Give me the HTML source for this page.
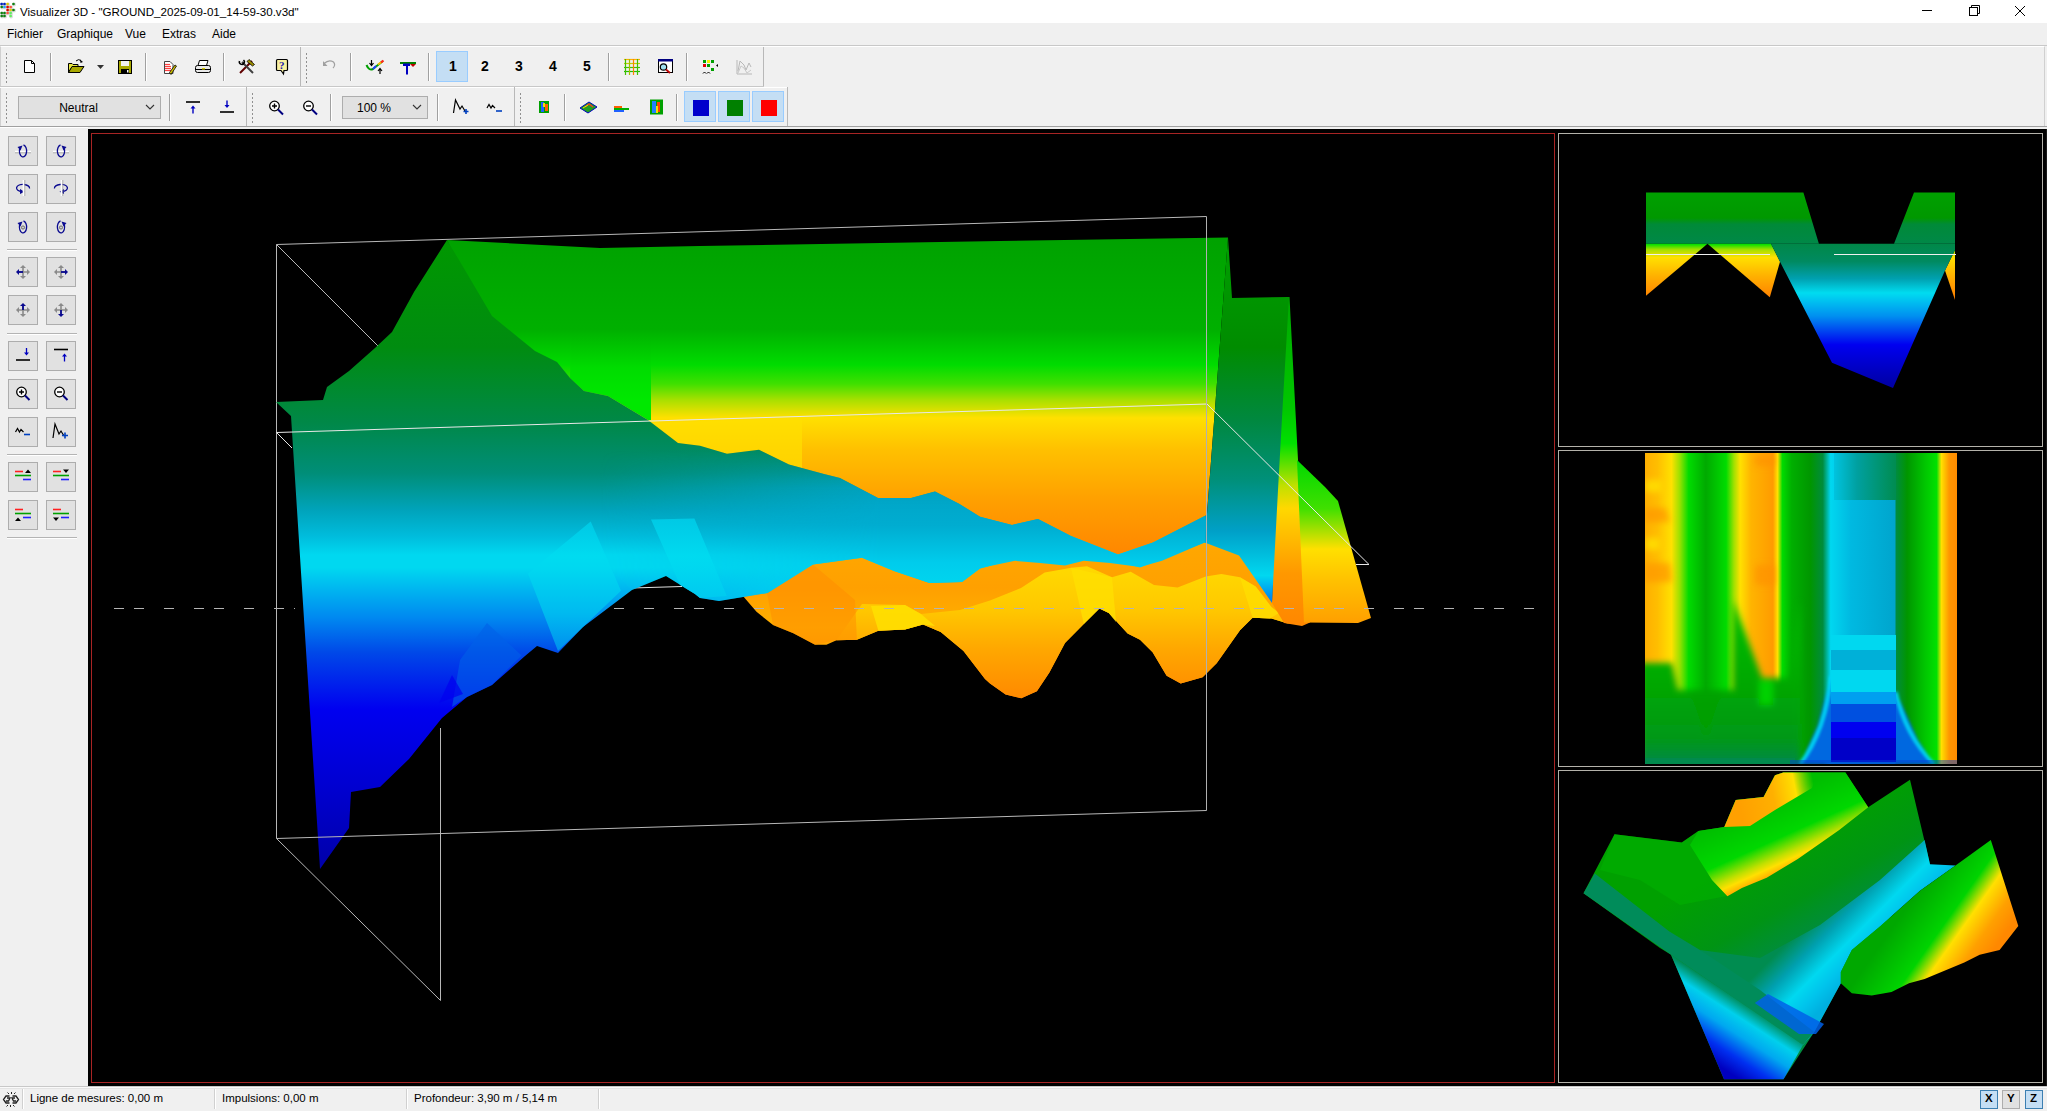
<!DOCTYPE html>
<html><head><meta charset="utf-8">
<style>
*{box-sizing:border-box}
html,body{margin:0;padding:0}
body{width:2047px;height:1111px;overflow:hidden;position:relative;background:#f0f0f0;font-family:"Liberation Sans",sans-serif;color:#000}
.a{position:absolute}
#title{left:0;top:0;width:2047px;height:23px;background:#fff}
#title .t{left:20px;top:5px;font-size:11.6px;white-space:nowrap}
.menu{top:27px;font-size:12px;white-space:nowrap}
.sep{position:absolute;width:1px;background:#a0a0a0;border-right:1px solid #fff;width:2px}
.grip{position:absolute;width:3px;background-image:radial-gradient(circle,#909090 0.8px,transparent 1px);background-size:3px 4px}
.sb{position:absolute;width:30px;height:30px;background:#e1e1e1;border:1px solid #adadad}
.sbsep{position:absolute;left:7px;width:70px;height:2px;border-top:1px solid #b0b0b0;border-bottom:1px solid #fff}
.sbt{position:absolute;top:1092px;font-size:11.5px;white-space:nowrap}
.ssep{position:absolute;top:1089px;width:2px;height:20px;border-left:1px solid #d0d0d0;border-right:1px solid #fff}
.num{position:absolute;top:58px;font-size:14px;font-weight:bold;width:20px;text-align:center}
.combo{position:absolute;background:#e1e1e1;border:1px solid #adadad;font-size:12px;text-align:center}
.selb{position:absolute;background:#c4def4;border:1px solid #99ccff}
</style></head><body>

<!-- title bar -->
<div id="title" class="a">
  <svg class="a" style="left:0;top:0" width="18" height="20"><circle cx="2.1" cy="4.5" r="1.9" fill="#999" opacity="0.35"/><circle cx="5.0" cy="4.5" r="1.9" fill="#999" opacity="0.35"/><circle cx="8.1" cy="4.5" r="1.9" fill="#999" opacity="0.35"/><circle cx="14.0" cy="4.5" r="1.9" fill="#999" opacity="0.35"/><circle cx="2.2" cy="7.5" r="1.9" fill="#999" opacity="0.35"/><circle cx="5.0" cy="7.5" r="1.9" fill="#999" opacity="0.35"/><circle cx="8.1" cy="7.5" r="1.9" fill="#999" opacity="0.35"/><circle cx="11.2" cy="7.5" r="1.9" fill="#999" opacity="0.35"/><circle cx="8.1" cy="10.5" r="1.9" fill="#999" opacity="0.35"/><circle cx="11.1" cy="10.5" r="1.9" fill="#999" opacity="0.35"/><circle cx="14.0" cy="10.5" r="1.9" fill="#999" opacity="0.35"/><circle cx="2.2" cy="13.5" r="1.9" fill="#999" opacity="0.35"/><circle cx="5.0" cy="13.5" r="1.9" fill="#999" opacity="0.35"/><circle cx="8.1" cy="13.5" r="1.9" fill="#999" opacity="0.35"/><circle cx="11.1" cy="13.5" r="1.9" fill="#999" opacity="0.35"/><circle cx="2.2" cy="16.5" r="1.9" fill="#999" opacity="0.35"/><circle cx="5.0" cy="16.5" r="1.9" fill="#999" opacity="0.35"/><circle cx="11.1" cy="16.5" r="1.9" fill="#999" opacity="0.35"/><circle cx="1.6" cy="4" r="1.35" fill="#0020c0"/><circle cx="4.5" cy="4" r="1.35" fill="#0020c0"/><circle cx="7.6" cy="4" r="1.35" fill="#e0c800"/><circle cx="13.5" cy="4" r="1.35" fill="#108010"/><circle cx="1.7" cy="7" r="1.35" fill="#108010"/><circle cx="4.5" cy="7" r="1.35" fill="#20a0ff"/><circle cx="7.6" cy="7" r="1.35" fill="#e00000"/><circle cx="10.7" cy="7" r="1.35" fill="#ff5040"/><circle cx="7.6" cy="10" r="1.35" fill="#d00000"/><circle cx="10.6" cy="10" r="1.35" fill="#e0c800"/><circle cx="13.5" cy="10" r="1.35" fill="#108010"/><circle cx="1.7" cy="13" r="1.35" fill="#108010"/><circle cx="4.5" cy="13" r="1.35" fill="#108010"/><circle cx="7.6" cy="13" r="1.35" fill="#ff5040"/><circle cx="10.6" cy="13" r="1.35" fill="#60f060"/><circle cx="1.7" cy="16" r="1.35" fill="#108010"/><circle cx="4.5" cy="16" r="1.35" fill="#108010"/><circle cx="10.6" cy="16" r="1.35" fill="#60f060"/></svg>
  <div class="a t">Visualizer 3D - "GROUND_2025-09-01_14-59-30.v3d"</div>
  <svg class="a" style="left:1900px;top:0" width="147" height="23">
    <line x1="22" y1="10.5" x2="32" y2="10.5" stroke="#000" stroke-width="1"/>
    <rect x="69.5" y="7.5" width="8" height="8" fill="none" stroke="#000"/>
    <path d="M71.5 7.5 V5.5 H79.5 V13.5 H77.5" fill="none" stroke="#000"/>
    <path d="M115 6 L125 16 M125 6 L115 16" stroke="#000" stroke-width="1"/>
  </svg>
</div>

<!-- menu -->
<div class="a menu" style="left:7px">Fichier</div>
<div class="a menu" style="left:57px">Graphique</div>
<div class="a menu" style="left:125px">Vue</div>
<div class="a menu" style="left:162px">Extras</div>
<div class="a menu" style="left:212px">Aide</div>

<!-- rebar -->
<div class="a" style="left:0;top:45px;width:2047px;height:1px;background:#c8c8c8"></div>
<div class="a" style="left:0;top:46px;width:2045px;height:81px;border:1px solid #d0d0d0;border-top-color:#fff"></div>
<div class="a" style="left:0;top:86px;width:764px;height:1px;background:#c8c8c8"></div><div class="a" style="left:0;top:87px;width:788px;height:1px;background:#fff"></div>
<div class="a" style="left:0;top:126px;width:2047px;height:1px;background:#a0a0a0"></div>
<div class="a" style="left:763px;top:47px;width:1px;height:39px;background:#b8b8b8"></div>
<div class="a" style="left:787px;top:87px;width:1px;height:39px;background:#b8b8b8"></div>
<div class="a" style="left:300px;top:47px;width:1px;height:39px;background:#b8b8b8"></div>
<div class="a" style="left:246px;top:87px;width:1px;height:39px;background:#b8b8b8"></div>
<div class="a" style="left:514px;top:87px;width:1px;height:39px;background:#b8b8b8"></div>

<div class="grip" style="left:5px;top:52px;height:32px"></div>
<div class="grip" style="left:305px;top:52px;height:32px"></div>
<div class="grip" style="left:5px;top:92px;height:32px"></div>
<div class="grip" style="left:251px;top:92px;height:32px"></div>
<div class="grip" style="left:519px;top:92px;height:32px"></div>

<div class="sep" style="left:50px;top:53px;height:28px"></div>
<div class="sep" style="left:145px;top:53px;height:28px"></div>
<div class="sep" style="left:223px;top:53px;height:28px"></div>
<div class="sep" style="left:350px;top:53px;height:28px"></div>
<div class="sep" style="left:428px;top:53px;height:28px"></div>
<div class="sep" style="left:608px;top:53px;height:28px"></div>
<div class="sep" style="left:686px;top:53px;height:28px"></div>

<div class="sep" style="left:169px;top:94px;height:27px"></div>
<div class="sep" style="left:330px;top:94px;height:27px"></div>
<div class="sep" style="left:437px;top:94px;height:27px"></div>
<div class="sep" style="left:564px;top:94px;height:27px"></div>
<div class="sep" style="left:676px;top:94px;height:27px"></div>

<div class="selb" style="left:436px;top:51px;width:32px;height:31px"></div>
<div class="num" style="left:443px">1</div>
<div class="num" style="left:475px">2</div>
<div class="num" style="left:509px">3</div>
<div class="num" style="left:543px">4</div>
<div class="num" style="left:577px">5</div>

<div class="combo" style="left:18px;top:96px;width:143px;height:23px;padding-top:4px;padding-right:22px">Neutral</div>
<div class="combo" style="left:342px;top:96px;width:86px;height:23px;padding-top:4px;padding-right:22px">100 %</div>

<div class="selb" style="left:684px;top:91px;width:32px;height:31px"></div>
<div class="selb" style="left:718px;top:91px;width:32px;height:31px"></div>
<div class="selb" style="left:752px;top:91px;width:32px;height:31px"></div>
<div class="a" style="left:693px;top:100px;width:16px;height:16px;background:#0000cc"></div>
<div class="a" style="left:727px;top:100px;width:16px;height:16px;background:#008000"></div>
<div class="a" style="left:761px;top:100px;width:16px;height:16px;background:#ff0000"></div>

<!-- TOOLBAR ICONS -->
<svg class="a" style="left:0;top:0" width="800" height="128" id="icons">
<!-- new doc -->
<path d="M24.5 60.5 H31.5 L34.5 63.5 V72.5 H24.5 Z" fill="#fff" stroke="#000"/>
<path d="M31.5 60.5 V63.5 H34.5" fill="none" stroke="#000"/>
<!-- open folder -->
<path d="M68.5 63.5 H72 L73 64.5 H78 V67 H72 L68.5 72.5 Z" fill="#e8e840" stroke="#000" stroke-width="1"/>
<path d="M68.5 72.5 L72 66.5 H84 L80 72.5 Z" fill="#a8a800" stroke="#000"/>
<path d="M76 61 Q78.5 58.5 81 60.5" fill="none" stroke="#000"/>
<path d="M80 59.5 L83 62 L80.5 63 Z" fill="#000"/>
<!-- dropdown -->
<path d="M97 65 H104 L100.5 69 Z" fill="#333"/>
<!-- save -->
<rect x="118.5" y="60.5" width="13" height="13" fill="#a8a800" stroke="#000"/>
<rect x="121" y="61" width="8" height="5" fill="#f0f0f0"/>
<rect x="121" y="69" width="8" height="4.5" fill="#000"/>
<rect x="127" y="70" width="1.5" height="2.5" fill="#fff"/>
<!-- print preview -->
<path d="M164.5 61.5 H170 L173 64.5 V73.5 H164.5 Z" fill="#fff" stroke="#444"/>
<g stroke="#ff4040" stroke-width="1.2"><line x1="165" y1="64.5" x2="170" y2="64.5"/><line x1="165" y1="66.5" x2="171" y2="66.5"/><line x1="165" y1="68.5" x2="171" y2="68.5"/><line x1="165" y1="70.5" x2="171" y2="70.5"/></g>
<path d="M171 74.5 L176.5 66 L175 65 L169.5 72.5 Z" fill="#d0c000" stroke="#000" stroke-width="0.8"/>
<!-- printer -->
<path d="M199.5 60.5 H208 L206.5 65.5 H198 Z" fill="#fff" stroke="#000"/>
<rect x="195.5" y="65.5" width="15" height="7" rx="2" fill="#e8e8e8" stroke="#000"/>
<line x1="196" y1="69.5" x2="210" y2="69.5" stroke="#000"/>
<rect x="202" y="68" width="3" height="1.5" fill="#d8d000"/>
<!-- tools -->
<path d="M240 73 L252 61" stroke="#600000" stroke-width="2"/>
<path d="M249 59.5 L254.5 64.5 L252.5 66 L247 61.5 Z" fill="#a09000" stroke="#000" stroke-width="0.8"/>
<path d="M242 62 L253 73" stroke="#404040" stroke-width="2"/>
<path d="M239.5 61 A2.5 2.5 0 1 0 243.5 60" fill="none" stroke="#000" stroke-width="1.5"/>
<!-- help -->
<path d="M277.5 59.5 H286.5 Q287.5 59.5 287.5 60.5 V69.5 Q287.5 70.5 286.5 70.5 H284 L283.5 74 L281 70.5 H277.5 Q276.5 70.5 276.5 69.5 V60.5 Q276.5 59.5 277.5 59.5 Z" fill="#f8f0a0" stroke="#000" stroke-width="1.2"/>
<text x="279" y="69" font-family="Liberation Serif" font-weight="bold" font-size="11" fill="#1818b0">?</text>
<!-- undo disabled -->
<path d="M324 63.5 Q329 59 333.5 62 Q336 65 333 68" fill="none" stroke="#a0a0a0" stroke-width="1.2"/>
<path d="M323 61 L323 66 L327.5 66 Z" fill="#a0a0a0"/>
<!-- icon rainbow -->
<path d="M366.5 65 Q369 71 373 69 L383 61" fill="none" stroke="#00a000" stroke-width="2"/>
<path d="M373 69 L376 66" stroke="#2040ff" stroke-width="2"/>
<path d="M378 64.5 L383 61" stroke="#ffc000" stroke-width="2"/>
<path d="M381 62.5 L383.5 60.5" stroke="#ff2020" stroke-width="2"/>
<path d="M371.5 60 V65 M369.5 63 L371.5 65.5 L373.5 63" stroke="#000" stroke-width="1.2" fill="none"/>
<path d="M380 69 V74 M378 71 L380 68.5 L382 71" stroke="#000" stroke-width="1.2" fill="none"/>
<!-- T icon -->
<rect x="400" y="62" width="16" height="2" fill="#008000"/>
<path d="M410 64 H416 L413 67 Z" fill="#c00000"/>
<path d="M403 63.5 H410 V66 H408 V74.5 H406 V66 H403 Z" fill="#0000c0"/>
<!-- grid -->
<g stroke-width="1.2">
<line x1="624" y1="59.5" x2="640" y2="59.5" stroke="#ffb000"/>
<line x1="624" y1="63.5" x2="640" y2="63.5" stroke="#c0d000"/>
<line x1="624" y1="67.5" x2="640" y2="67.5" stroke="#40c000"/>
<line x1="624" y1="71.5" x2="640" y2="71.5" stroke="#20c000"/>
<line x1="625.5" y1="59" x2="625.5" y2="75" stroke="#40c000"/>
<line x1="629.5" y1="59" x2="629.5" y2="75" stroke="#a0c000"/>
<line x1="633.5" y1="59" x2="633.5" y2="75" stroke="#ff8000"/>
<line x1="637.5" y1="59" x2="637.5" y2="75" stroke="#40c000"/>
</g>
<!-- zoom window -->
<rect x="658.5" y="59.5" width="14" height="13" fill="#fff" stroke="#000"/>
<rect x="658" y="59" width="15" height="2.5" fill="#000080"/>
<circle cx="663.5" cy="67" r="3.2" fill="#a0e0f0" stroke="#000" stroke-width="1.2"/>
<line x1="666" y1="69.5" x2="670" y2="73" stroke="#c00000" stroke-width="1.8"/>
<!-- dots -->
<rect x="703" y="60" width="3" height="3" fill="#00a000"/><rect x="707" y="60" width="3" height="3" fill="#f0f000"/><rect x="711" y="60" width="3" height="3" fill="#00a000"/>
<rect x="703" y="64" width="3" height="3" fill="#e00000"/><rect x="707" y="64" width="3" height="3" fill="#00a000"/>
<rect x="711" y="68" width="3" height="3" fill="#00a000"/>
<path d="M716 65.5 L718 64 V67 Z" fill="#000"/>
<path d="M703 73.5 L704.5 72 L706 73.5 M707 73.5 L708.5 72 L710 73.5" stroke="#000" fill="none"/>
<!-- chart disabled -->
<path d="M737 60 V74 H752" fill="none" stroke="#b8b8b8"/>
<path d="M738 71 L740 61 L744 65 L746 70 L749 63 L751 67" fill="none" stroke="#b8b8b8"/>
<path d="M738 73 L741 66 L744 68 L747 73 L751 70" fill="none" stroke="#c8c8c8"/>
<!-- row 2 -->
<line x1="186" y1="102" x2="200" y2="102" stroke="#000" stroke-width="1.6"/>
<path d="M193 113.5 V107" stroke="#0000c0" stroke-width="1.4"/>
<path d="M190.5 108.5 L193 105.5 L195.5 108.5 Z" fill="#0000c0"/>
<line x1="220" y1="112" x2="234" y2="112" stroke="#000" stroke-width="1.6"/>
<path d="M227 100.5 V106" stroke="#0000c0" stroke-width="1.4"/>
<path d="M224.5 105 L227 108 L229.5 105 Z" fill="#0000c0"/>
<!-- zoom + -->
<circle cx="274.5" cy="106" r="4.8" fill="#fff" stroke="#000" stroke-width="1.3"/>
<path d="M278 109.5 L283 114.5" stroke="#000080" stroke-width="2"/>
<path d="M272 106 H277 M274.5 103.5 V108.5" stroke="#000" stroke-width="1.4"/>
<circle cx="308.5" cy="106" r="4.8" fill="#fff" stroke="#000" stroke-width="1.3"/>
<path d="M312 109.5 L317 114.5" stroke="#000080" stroke-width="2"/>
<path d="M306 106 H311" stroke="#000" stroke-width="1.4"/>
<!-- combos chevrons -->
<path d="M146 105 L150 109 L154 105" fill="none" stroke="#333" stroke-width="1.1"/>
<path d="M413 105 L417 109 L421 105" fill="none" stroke="#333" stroke-width="1.1"/>
<!-- M+ -->
<path d="M453.5 113 L455.5 100 L460 109 L462 106 L465 111" fill="none" stroke="#000" stroke-width="1.2"/>
<path d="M463.5 111.5 H468.5 M466 109 V114" stroke="#0040c0" stroke-width="1.6"/>
<!-- M- -->
<path d="M487 108 L489 104.5 L491 108 L492.5 105.5 L495 108" fill="none" stroke="#000" stroke-width="1.2"/>
<path d="M496 111 H502" stroke="#0040c0" stroke-width="1.6"/>
<!-- small heatmap -->
<rect x="539" y="101" width="10" height="12" fill="#00a000"/>
<rect x="541" y="102" width="3" height="10" fill="#2060ff"/>
<rect x="545" y="104" width="3" height="7" fill="#ff6000"/>
<rect x="543" y="103" width="2" height="4" fill="#f0e000"/>
<!-- 3D icon -->
<path d="M580 108 L589 102 L597 107 L588 113 Z" fill="#20a020" stroke="#0000c0" stroke-width="1"/>
<path d="M585 107 L589 104 L593 107" fill="none" stroke="#ff3030" stroke-width="1.2"/>
<path d="M583 108 L588 105" stroke="#f0e000" stroke-width="1"/>
<!-- flat icon -->
<rect x="614" y="106" width="8" height="2" fill="#ff6000"/>
<rect x="614" y="108" width="15" height="2" fill="#00b000"/>
<rect x="614" y="110" width="10" height="2" fill="#2060ff"/>
<!-- heatmap big -->
<rect x="650" y="99.5" width="13" height="15" fill="#00a000"/>
<rect x="652" y="101" width="4" height="12" fill="#2080ff"/>
<rect x="657" y="102" width="3" height="10" fill="#ff4000"/>
<rect x="656" y="106" width="2" height="7" fill="#f0e000"/>

</svg>

<!-- sidebar -->
<div class="a" style="left:0;top:127px;width:88px;height:960px;background:#f0f0f0;border-top:1px solid #fff"></div>
<div id="sidebar">
<svg class="a" style="left:0;top:0" width="88" height="560">
<rect x="8.5" y="136.5" width="29" height="29" fill="#e1e1e1" stroke="#adadad"/>
<rect x="46.5" y="136.5" width="29" height="29" fill="#e1e1e1" stroke="#adadad"/>
<rect x="8.5" y="174.5" width="29" height="29" fill="#e1e1e1" stroke="#adadad"/>
<rect x="46.5" y="174.5" width="29" height="29" fill="#e1e1e1" stroke="#adadad"/>
<rect x="8.5" y="212.5" width="29" height="29" fill="#e1e1e1" stroke="#adadad"/>
<rect x="46.5" y="212.5" width="29" height="29" fill="#e1e1e1" stroke="#adadad"/>
<rect x="8.5" y="257.5" width="29" height="29" fill="#e1e1e1" stroke="#adadad"/>
<rect x="46.5" y="257.5" width="29" height="29" fill="#e1e1e1" stroke="#adadad"/>
<rect x="8.5" y="295.5" width="29" height="29" fill="#e1e1e1" stroke="#adadad"/>
<rect x="46.5" y="295.5" width="29" height="29" fill="#e1e1e1" stroke="#adadad"/>
<rect x="8.5" y="341.5" width="29" height="29" fill="#e1e1e1" stroke="#adadad"/>
<rect x="46.5" y="341.5" width="29" height="29" fill="#e1e1e1" stroke="#adadad"/>
<rect x="8.5" y="379.5" width="29" height="29" fill="#e1e1e1" stroke="#adadad"/>
<rect x="46.5" y="379.5" width="29" height="29" fill="#e1e1e1" stroke="#adadad"/>
<rect x="8.5" y="417.5" width="29" height="29" fill="#e1e1e1" stroke="#adadad"/>
<rect x="46.5" y="417.5" width="29" height="29" fill="#e1e1e1" stroke="#adadad"/>
<rect x="8.5" y="462.5" width="29" height="29" fill="#e1e1e1" stroke="#adadad"/>
<rect x="46.5" y="462.5" width="29" height="29" fill="#e1e1e1" stroke="#adadad"/>
<rect x="8.5" y="500.5" width="29" height="29" fill="#e1e1e1" stroke="#adadad"/>
<rect x="46.5" y="500.5" width="29" height="29" fill="#e1e1e1" stroke="#adadad"/>
<line x1="7" y1="249.5" x2="77" y2="249.5" stroke="#b4b4b4"/><line x1="7" y1="250.5" x2="77" y2="250.5" stroke="#fff"/>
<line x1="7" y1="333.5" x2="77" y2="333.5" stroke="#b4b4b4"/><line x1="7" y1="334.5" x2="77" y2="334.5" stroke="#fff"/>
<line x1="7" y1="454.5" x2="77" y2="454.5" stroke="#b4b4b4"/><line x1="7" y1="455.5" x2="77" y2="455.5" stroke="#fff"/>
<line x1="7" y1="537.5" x2="77" y2="537.5" stroke="#b4b4b4"/><line x1="7" y1="538.5" x2="77" y2="538.5" stroke="#fff"/>
<line x1="15" y1="151.5" x2="31" y2="151.5" stroke="#fff" stroke-width="1.6"/><line x1="15" y1="152.8" x2="31" y2="152.8" stroke="#a0a0a0" stroke-width="0.8"/><path d="M23.5 145 A3.6 6 0 1 1 19.6 149" fill="none" stroke="#0a0a90" stroke-width="1.3"/><path d="M17.5 147 L22.5 145.5 L20.5 150.5 Z" fill="#0a0a90"/>
<line x1="53" y1="151.5" x2="69" y2="151.5" stroke="#fff" stroke-width="1.6"/><line x1="53" y1="152.8" x2="69" y2="152.8" stroke="#a0a0a0" stroke-width="0.8"/><path d="M60.5 145 A3.6 6 0 1 0 64.4 149" fill="none" stroke="#0a0a90" stroke-width="1.3"/><path d="M66.5 147 L61.5 145.5 L63.5 150.5 Z" fill="#0a0a90"/>
<path d="M29.5 188.5 A6.5 3.6 0 1 0 22 191.6" fill="none" stroke="#0a0a90" stroke-width="1.3"/><path d="M20 189 L24.5 191.8 L20 194 Z" fill="#0a0a90"/><line x1="23.5" y1="180" x2="23.5" y2="196" stroke="#fff" stroke-width="1.6"/><line x1="24.8" y1="180" x2="24.8" y2="196" stroke="#a0a0a0" stroke-width="0.8"/>
<path d="M54.5 188.5 A6.5 3.6 0 1 1 62 191.6" fill="none" stroke="#0a0a90" stroke-width="1.3"/><path d="M64 189 L59.5 191.8 L64 194 Z" fill="#0a0a90"/><line x1="61.5" y1="180" x2="61.5" y2="196" stroke="#fff" stroke-width="1.6"/><line x1="62.8" y1="180" x2="62.8" y2="196" stroke="#a0a0a0" stroke-width="0.8"/>
<path d="M23.5 221 A3.6 6 0 1 1 19.6 225" fill="none" stroke="#0a0a90" stroke-width="1.3"/><path d="M17.5 223 L22.5 221.5 L20.5 226.5 Z" fill="#0a0a90"/><circle cx="23" cy="227.5" r="1.6" fill="#d0d0d0" stroke="#404040" stroke-width="0.7"/>
<path d="M60.5 221 A3.6 6 0 1 0 64.4 225" fill="none" stroke="#0a0a90" stroke-width="1.3"/><path d="M66.5 223 L61.5 221.5 L63.5 226.5 Z" fill="#0a0a90"/><circle cx="61" cy="227.5" r="1.6" fill="#d0d0d0" stroke="#404040" stroke-width="0.7"/>
<path d="M17 272 H29 M23 266 V278" stroke="#8a8a8a" stroke-width="1.6"/><path d="M16 272 l3 -3 v6 z" fill="#0a0a90"/><path d="M30 272 l-3 -3 v6 z" fill="#8a8a8a"/><path d="M23 265 l-3 3 h6 z" fill="#8a8a8a"/><path d="M23 279 l-3 -3 h6 z" fill="#8a8a8a"/><path d="M17 272 H23" stroke="#0a0a90" stroke-width="1.8"/>
<path d="M55 272 H67 M61 266 V278" stroke="#8a8a8a" stroke-width="1.6"/><path d="M54 272 l3 -3 v6 z" fill="#8a8a8a"/><path d="M68 272 l-3 -3 v6 z" fill="#0a0a90"/><path d="M61 265 l-3 3 h6 z" fill="#8a8a8a"/><path d="M61 279 l-3 -3 h6 z" fill="#8a8a8a"/><path d="M61 272 H67" stroke="#0a0a90" stroke-width="1.8"/>
<path d="M17 310 H29 M23 304 V316" stroke="#8a8a8a" stroke-width="1.6"/><path d="M16 310 l3 -3 v6 z" fill="#8a8a8a"/><path d="M30 310 l-3 -3 v6 z" fill="#8a8a8a"/><path d="M23 303 l-3 3 h6 z" fill="#0a0a90"/><path d="M23 317 l-3 -3 h6 z" fill="#8a8a8a"/><path d="M23 304 V310" stroke="#0a0a90" stroke-width="1.8"/>
<path d="M55 310 H67 M61 304 V316" stroke="#8a8a8a" stroke-width="1.6"/><path d="M54 310 l3 -3 v6 z" fill="#8a8a8a"/><path d="M68 310 l-3 -3 v6 z" fill="#8a8a8a"/><path d="M61 303 l-3 3 h6 z" fill="#8a8a8a"/><path d="M61 317 l-3 -3 h6 z" fill="#0a0a90"/><path d="M61 310 V316" stroke="#0a0a90" stroke-width="1.8"/>
<line x1="16" y1="360" x2="30" y2="360" stroke="#000" stroke-width="1.6"/><path d="M26.5 348 V353" stroke="#0000c0" stroke-width="1.3"/><path d="M24 352.5 L26.5 355.5 L29 352.5 Z" fill="#0000c0"/>
<line x1="54" y1="349.5" x2="68" y2="349.5" stroke="#000" stroke-width="1.6"/><path d="M64.5 361.5 V356" stroke="#0000c0" stroke-width="1.3"/><path d="M62 356.5 L64.5 353.5 L67 356.5 Z" fill="#0000c0"/>
<circle cx="21.5" cy="392" r="4.8" fill="#fff" stroke="#000" stroke-width="1.3"/><path d="M25 395.5 L29.5 400" stroke="#000080" stroke-width="2"/><path d="M19 392 H24 M21.5 389.5 V394.5" stroke="#000" stroke-width="1.4"/>
<circle cx="59.5" cy="392" r="4.8" fill="#fff" stroke="#000" stroke-width="1.3"/><path d="M63 395.5 L67.5 400" stroke="#000080" stroke-width="2"/><path d="M57 392 H62" stroke="#000" stroke-width="1.4"/>
<path d="M15.5 432 L17.5 428.5 L19.5 432 L21 429.5 L23.5 432" fill="none" stroke="#000" stroke-width="1.2"/><path d="M24 434.5 H30" stroke="#0040c0" stroke-width="1.6"/>
<path d="M53 438 L55 424 L59 434 L61 431 L64 436" fill="none" stroke="#000" stroke-width="1.2"/><path d="M62 435.5 H68 M65 432.5 V438.5" stroke="#0040c0" stroke-width="1.6"/>
<path d="M15 471.5 H23" stroke="#ff2020" stroke-width="1.6"/><path d="M15 475.5 H31" stroke="#00a000" stroke-width="1.6"/><path d="M23 479.5 H31" stroke="#2020ff" stroke-width="1.6"/><path d="M25 473 L28 469.5 L31 473 Z" fill="#000"/>
<path d="M53 471.5 H61" stroke="#ff2020" stroke-width="1.6"/><path d="M53 475.5 H69" stroke="#00a000" stroke-width="1.6"/><path d="M61 479.5 H69" stroke="#2020ff" stroke-width="1.6"/><path d="M63 469.5 L66 473 L69 469.5 Z" fill="#000"/>
<path d="M15 509.5 H23" stroke="#ff2020" stroke-width="1.6"/><path d="M15 513.5 H31" stroke="#00a000" stroke-width="1.6"/><path d="M23 517.5 H31" stroke="#2020ff" stroke-width="1.6"/><path d="M15 521 L18 517.5 L21 521 Z" fill="#000"/>
<path d="M53 509.5 H61" stroke="#ff2020" stroke-width="1.6"/><path d="M53 513.5 H69" stroke="#00a000" stroke-width="1.6"/><path d="M61 517.5 H69" stroke="#2020ff" stroke-width="1.6"/><path d="M53 517.5 L56 521 L59 517.5 Z" fill="#000"/>
</svg>
</div>

<!-- viewport -->
<div class="a" style="left:88px;top:129px;width:1959px;height:957px;background:#000"></div>
<div class="a" style="left:2046px;top:129px;width:1px;height:958px;background:#1a1a1a"></div>
<svg class="a" style="left:0;top:0" width="2047" height="1111" id="vp">
<defs>
<linearGradient id="gBack" gradientUnits="userSpaceOnUse" x1="0" y1="240" x2="0" y2="560">
 <stop offset="0" stop-color="#00a200"/>
 <stop offset="0.28" stop-color="#00b000"/>
 <stop offset="0.39" stop-color="#00dc00"/>
 <stop offset="0.45" stop-color="#40e000"/>
 <stop offset="0.50" stop-color="#a8e000"/>
 <stop offset="0.556" stop-color="#ffe000"/>
 <stop offset="0.656" stop-color="#ffc000"/>
 <stop offset="0.81" stop-color="#ffa000"/>
 <stop offset="1" stop-color="#ff8400"/>
</linearGradient>
<linearGradient id="gFront" gradientUnits="userSpaceOnUse" x1="0" y1="240" x2="0" y2="870">
 <stop offset="0" stop-color="#009800"/>
 <stop offset="0.17" stop-color="#008c10"/>
 <stop offset="0.29" stop-color="#008848"/>
 <stop offset="0.37" stop-color="#008e78"/>
 <stop offset="0.43" stop-color="#00a4bc"/>
 <stop offset="0.47" stop-color="#00bcdc"/>
 <stop offset="0.50" stop-color="#00d8f0"/>
 <stop offset="0.52" stop-color="#00d8f0"/>
 <stop offset="0.56" stop-color="#00b0f0"/>
 <stop offset="0.60" stop-color="#0088f0"/>
 <stop offset="0.655" stop-color="#0048e8"/>
 <stop offset="0.745" stop-color="#0000f0"/>
 <stop offset="0.87" stop-color="#0000d0"/>
 <stop offset="1" stop-color="#0000a8"/>
</linearGradient>
<linearGradient id="gYel" gradientUnits="userSpaceOnUse" x1="0" y1="570" x2="0" y2="700">
 <stop offset="0" stop-color="#ffd800"/>
 <stop offset="0.3" stop-color="#ffc800"/>
 <stop offset="0.6" stop-color="#ffa800"/>
 <stop offset="1" stop-color="#ff8800"/>
</linearGradient>
<linearGradient id="gBright" gradientUnits="userSpaceOnUse" x1="0" y1="335" x2="0" y2="400">
 <stop offset="0" stop-color="#00b400" stop-opacity="0"/>
 <stop offset="0.5" stop-color="#00dc00"/>
 <stop offset="1" stop-color="#00e800"/>
</linearGradient>
<linearGradient id="gBandMask" gradientUnits="userSpaceOnUse" x1="600" y1="0" x2="880" y2="0">
 <stop offset="0" stop-color="#000"/><stop offset="1" stop-color="#fff"/>
</linearGradient>
<mask id="mBand" maskUnits="userSpaceOnUse" x="0" y="0" width="2047" height="1111"><rect x="0" y="0" width="2047" height="1111" fill="url(#gBandMask)"/></mask>
<linearGradient id="gBand" gradientUnits="userSpaceOnUse" x1="0" y1="450" x2="0" y2="600">
 <stop offset="0" stop-color="#00a0c0" stop-opacity="0"/>
 <stop offset="0.25" stop-color="#00a4c8" stop-opacity="0.8"/>
 <stop offset="0.5" stop-color="#00acd0"/>
 <stop offset="0.75" stop-color="#00ccec"/>
 <stop offset="1" stop-color="#00dcf0"/>
</linearGradient>
<linearGradient id="gFacet" gradientUnits="userSpaceOnUse" x1="0" y1="515" x2="0" y2="655">
 <stop offset="0" stop-color="#00d0ec"/>
 <stop offset="0.3" stop-color="#00dcf0"/>
 <stop offset="0.7" stop-color="#00c8f0"/>
 <stop offset="1" stop-color="#00a0f0"/>
</linearGradient>
<linearGradient id="gLow" gradientUnits="userSpaceOnUse" x1="0" y1="540" x2="0" y2="700">
 <stop offset="0" stop-color="#ffa800"/>
 <stop offset="0.3" stop-color="#ffa000"/>
 <stop offset="0.55" stop-color="#ffb000"/>
 <stop offset="0.8" stop-color="#ff9800"/>
 <stop offset="1" stop-color="#ff8000"/>
</linearGradient>
<linearGradient id="gRDark" gradientUnits="userSpaceOnUse" x1="0" y1="237" x2="0" y2="605">
 <stop offset="0" stop-color="#00a000"/>
 <stop offset="0.3" stop-color="#008c00"/>
 <stop offset="0.5" stop-color="#008840"/>
 <stop offset="0.66" stop-color="#00907a"/>
 <stop offset="0.8" stop-color="#00a0c8"/>
 <stop offset="0.92" stop-color="#00d8f0"/>
 <stop offset="1" stop-color="#0070f0"/>
</linearGradient>
<linearGradient id="gRStrip" gradientUnits="userSpaceOnUse" x1="0" y1="297" x2="0" y2="622">
 <stop offset="0" stop-color="#00a800"/>
 <stop offset="0.35" stop-color="#00c800"/>
 <stop offset="0.45" stop-color="#00e000"/>
 <stop offset="0.58" stop-color="#c0e000"/>
 <stop offset="0.65" stop-color="#ffd800"/>
 <stop offset="0.85" stop-color="#ff9800"/>
 <stop offset="1" stop-color="#ff8800"/>
</linearGradient>
<linearGradient id="gRTri" gradientUnits="userSpaceOnUse" x1="0" y1="460" x2="0" y2="622">
 <stop offset="0" stop-color="#00d800"/>
 <stop offset="0.3" stop-color="#40e000"/>
 <stop offset="0.55" stop-color="#ffe000"/>
 <stop offset="0.75" stop-color="#ffc000"/>
 <stop offset="1" stop-color="#ffa000"/>
</linearGradient>
</defs>
<g id="main">
<g stroke="#b8b8b8" stroke-width="1" fill="none">
 <line x1="276.5" y1="244.5" x2="1206.5" y2="216.5"/>
 <line x1="276.5" y1="244.5" x2="276.5" y2="838.5"/>
 <line x1="276.5" y1="244.5" x2="378" y2="346"/>
 <line x1="276.5" y1="838.5" x2="440.5" y2="1000.5"/>
 <line x1="440.5" y1="728" x2="440.5" y2="1000.5"/>
 <line x1="632" y1="588" x2="682" y2="586.5" stroke="#e0e0e0"/>
</g>
<polygon fill="url(#gBack)" points="447,240 600,248 700,246 1000,241 1228,237.5 1207,514 1203.7,518.6 1151,545.6 1116,557.5 1069,539 1036,522 1010,528 978,519.7 957,506.7 933,494.6 909,501 876,501 838,481 822,477 787,467.6 757,452.7 725,456.8 698,448.7 676,446 646,423 606,399 582,394 568,381 555,365 533,354 517,341 490,319 460,268"/>
<polygon fill="#ffe000" opacity="0.7" points="653,423 802,418 802,468 789,464.6 759,449.7 727,453.8 700,445.7 678,443"/>
<polygon fill="url(#gBright)" points="571,335 651,335 651,420 648,420 608,396 584,391 570,378"/>
<polygon fill="url(#gLow)" points="700,595 719,598 743,594 767.5,590 813,561.5 862,554.7 894,568 929.5,580 962,579 980,565.5 990,563 1015,557.8 1040,560 1065,562.5 1083.8,557.8 1110,560 1140,564 1162,557.8 1204.6,539.6 1239,552.6 1254,574 1271.6,600 1302.6,623.3 1302.6,623.3 1287,623.3 1271.4,618.6 1252.6,617.8 1240,630.3 1216.7,663.2 1202.6,677.2 1180.7,683.5 1166.6,675.7 1152.6,652.2 1140,639.7 1127.6,633.5 1108.8,613 1099.4,608.5 1083.8,624 1065,642.9 1049.4,672.6 1036.9,691.3 1021.3,698.3 1005.6,694.4 990,683.5 985,679 963.5,651 940.7,632 923,624.5 905,629.5 878.4,630.8 856.9,639.7 836.5,640.3 826.4,644.8 815,644.8 793.3,633.3 773,625 756.5,611.8 743.8,597"/>
<polygon fill="url(#gYel)" points="862,604 905,605 921,614 960,610 990,600.6 1021,588 1044.7,572.5 1071.3,567.8 1087,566.3 1112,577.2 1130.7,571.7 1154,585 1177.6,587.4 1205.7,576.4 1221.4,574 1240,577.2 1255.7,586.6 1271.4,607 1279,613 1302.6,623.3 1302.6,623.3 1287,623.3 1271.4,618.6 1252.6,617.8 1240,630.3 1216.7,663.2 1202.6,677.2 1180.7,683.5 1166.6,675.7 1152.6,652.2 1140,639.7 1127.6,633.5 1108.8,613 1099.4,608.5 1083.8,624 1065,642.9 1049.4,672.6 1036.9,691.3 1021.3,698.3 1005.6,694.4 990,683.5 985,679 963.5,651 940.7,632 923,624.5 905,629.5 878.4,630.8 856.9,639.7 836.5,640.3"/>
<polygon fill="#ffe000" opacity="0.75" points="1071,567.8 1112,577.2 1116,622 1108.8,613 1099.4,608.5 1083.8,624"/>
<polygon fill="#ffe000" opacity="0.7" points="1240,577.2 1255.7,586.6 1271.4,607 1279,613 1270,618.6 1252.6,617.8"/>
<polygon fill="#ffe000" opacity="0.85" points="871,606 905,605 921,614 935,626 923,624.5 905,629.5 878.4,630.8"/>
<polygon fill="#ff8c00" opacity="0.5" points="767,593 813,564.5 855,600 856.9,639.7 836.5,640.3 815,644.8 793.3,633.3 773,625"/>
<line x1="114" y1="608.5" x2="295" y2="608.5" stroke="#b4b4b4" stroke-dasharray="10 10 10 20 10 20"/>
<polygon fill="url(#gFront)" points="276,402 323,400 327,387 349,371 375,348 392,332 414,292 447,240 462,265 492,316 519,338 535,351 557,362 570,378 584,391 608,396 648,420 678,443 700,445.7 727,453.8 759,449.7 789,464.6 824,474 840,478 878,498 911,498 935,491.6 959,503.7 980,516.7 1012,525 1038,519 1071,536 1118,554.5 1153,542.6 1205.7,515.6 1207,543 1204.6,542.6 1140,567.5 1090,554.5 1064,565 1023,556.7 980,568.5 962,582 929.5,583 894,571 862,557.7 813,564.5 767.5,593 743,597 719,601 700,598 695,594 666,576 632,590 583,627 558,653 537,646 525,656 492,685 467,697 442,718 409,759 380,787 351,792 349,828 320,869 291,416"/>
<polygon mask="url(#mBand)" fill="url(#gBand)" points="727,453.8 759,449.7 789,464.6 824,474 840,478 878,498 911,498 935,491.6 959,503.7 980,516.7 1012,525 1038,519 1071,536 1118,554.5 1153,542.6 1205.7,515.6 1207,543 1204.6,542.6 1162,560.8 1140,567 1110,563 1083.8,560.8 1065,565.5 1040,563 1015,560.8 990,566 980,568.5 962,582 929.5,583 894,571 862,557.7 813,564.5 767.5,593 743,597 719,601 700,598 695,594 666,576 632,590 600,560 584,391 608,396 648,420 678,443 700,445.7"/>
<polygon fill="url(#gFacet)" opacity="0.75" points="590.7,521.6 621,590.8 583,627 558,651 528,573.5"/>
<polygon fill="url(#gFacet)" opacity="0.8" points="651,519.4 694.4,518.4 726.8,596 700,598 695,594 680,585"/>
<polygon fill="#0060e8" opacity="0.6" points="487,623 521.6,655.6 492,685 467,697 452,707 460,660"/>
<polygon fill="#0000f0" opacity="0.7" points="452,675 463,694 439,703"/>
<polygon fill="url(#gRStrip)" points="1286,297 1289.5,297 1298,460 1310,622.5 1302,626 1284,623 1272,603 1275,490 1280,400"/>
<polygon fill="url(#gRTri)" points="1297,460 1325,487 1338,501 1371,618 1358,623 1304,622.5"/>
<polygon fill="url(#gRDark)" points="1228,237.5 1232,298 1289,297 1283,400 1278,490 1272,603 1254,577 1239,555.6 1204.6,542.6 1207,514"/>
</g>
<g stroke="#e8e8e8" stroke-width="1" fill="none">
 <line x1="276.5" y1="432.5" x2="1207" y2="404"/>
 <line x1="276.5" y1="432.5" x2="292" y2="448"/>
 <line x1="1207" y1="404" x2="1369" y2="564.5"/>
 <line x1="1356" y1="564.5" x2="1369" y2="564.5"/>
 <line x1="1206.5" y1="216.5" x2="1206.5" y2="810.5" stroke="#b0b0b0"/>
 <line x1="276.5" y1="838.5" x2="1206.5" y2="810.5" stroke="#b8b8b8"/>
</g>
<line x1="614" y1="608.5" x2="1535" y2="608.5" stroke="#b4b4b4" stroke-dasharray="10 10 10 20 10 20" stroke-dashoffset="20"/>
<rect x="91.5" y="133.5" width="1463" height="949" fill="none" stroke="#a82424" stroke-width="1"/>

<defs>
<linearGradient id="pTopGreen" gradientUnits="userSpaceOnUse" x1="0" y1="192" x2="0" y2="244">
 <stop offset="0" stop-color="#00a000"/><stop offset="0.5" stop-color="#009800"/><stop offset="0.62" stop-color="#008a38"/><stop offset="1" stop-color="#008848"/>
</linearGradient>
<linearGradient id="pTopOr" gradientUnits="userSpaceOnUse" x1="0" y1="244" x2="0" y2="298">
 <stop offset="0" stop-color="#00e000"/><stop offset="0.1" stop-color="#a0e000"/><stop offset="0.25" stop-color="#ffe000"/><stop offset="0.6" stop-color="#ffb000"/><stop offset="1" stop-color="#ff8000"/>
</linearGradient>
<linearGradient id="pTopV" gradientUnits="userSpaceOnUse" x1="0" y1="244" x2="0" y2="388">
 <stop offset="0" stop-color="#008848"/><stop offset="0.12" stop-color="#008a60"/><stop offset="0.24" stop-color="#00a0b0"/><stop offset="0.34" stop-color="#00dcf0"/><stop offset="0.5" stop-color="#0090f0"/><stop offset="0.7" stop-color="#0000f0"/><stop offset="1" stop-color="#0000a0"/>
</linearGradient>
<linearGradient id="pHeat" gradientUnits="userSpaceOnUse" x1="1645" y1="0" x2="1957" y2="0">
 <stop offset="0" stop-color="#ffaf00"/>
 <stop offset="0.04" stop-color="#ffbe00"/>
 <stop offset="0.085" stop-color="#ffe100"/>
 <stop offset="0.11" stop-color="#a0e100"/>
 <stop offset="0.14" stop-color="#00dc00"/>
 <stop offset="0.195" stop-color="#00aa00"/>
 <stop offset="0.26" stop-color="#00dc00"/>
 <stop offset="0.285" stop-color="#a0e100"/>
 <stop offset="0.305" stop-color="#ffe100"/>
 <stop offset="0.34" stop-color="#ffb400"/>
 <stop offset="0.41" stop-color="#ff9b00"/>
 <stop offset="0.425" stop-color="#ffe100"/>
 <stop offset="0.44" stop-color="#00dc00"/>
 <stop offset="0.47" stop-color="#00af00"/>
 <stop offset="0.53" stop-color="#009600"/>
 <stop offset="0.57" stop-color="#008c3c"/>
 <stop offset="0.595" stop-color="#00d7f0"/>
 <stop offset="0.66" stop-color="#00b9e1"/>
 <stop offset="0.8" stop-color="#00a5cd"/>
 <stop offset="0.806" stop-color="#008c3c"/>
 <stop offset="0.84" stop-color="#009600"/>
 <stop offset="0.9" stop-color="#00c800"/>
 <stop offset="0.935" stop-color="#00e100"/>
 <stop offset="0.95" stop-color="#ffe100"/>
 <stop offset="0.975" stop-color="#ff9600"/>
 <stop offset="1" stop-color="#ff8c00"/>
</linearGradient>
<linearGradient id="pHeatG2" gradientUnits="userSpaceOnUse" x1="0" y1="600" x2="0" y2="764">
 <stop offset="0" stop-color="#00c000"/><stop offset="0.5" stop-color="#00a800"/><stop offset="0.85" stop-color="#009818"/><stop offset="1" stop-color="#008848"/>
</linearGradient>
<linearGradient id="pTeal" gradientUnits="userSpaceOnUse" x1="1831" y1="0" x2="1896" y2="0">
 <stop offset="0" stop-color="#00c8e8"/><stop offset="0.4" stop-color="#00a0a0"/><stop offset="1" stop-color="#008c50"/>
</linearGradient>
<linearGradient id="pTealV" gradientUnits="userSpaceOnUse" x1="0" y1="480" x2="0" y2="502">
 <stop offset="0" stop-color="#fff"/><stop offset="1" stop-color="#000"/>
</linearGradient>
<mask id="mTeal" maskUnits="userSpaceOnUse" x="1800" y="440" width="120" height="80"><rect x="1800" y="440" width="120" height="80" fill="url(#pTealV)"/></mask>
<filter id="blur3" x="-10%" y="-10%" width="120%" height="120%"><feGaussianBlur stdDeviation="3"/></filter>
<filter id="blur2" x="-10%" y="-10%" width="120%" height="120%"><feGaussianBlur stdDeviation="1.5"/></filter>
<clipPath id="cHeat"><rect x="1645" y="453" width="312" height="311"/></clipPath>
<linearGradient id="pHeatG" gradientUnits="userSpaceOnUse" x1="1645" y1="0" x2="1790" y2="0">
 <stop offset="0" stop-color="#00c000"/><stop offset="0.4" stop-color="#009c00"/><stop offset="0.7" stop-color="#00a800"/><stop offset="1" stop-color="#009000"/>
</linearGradient>
<linearGradient id="pFar" gradientUnits="userSpaceOnUse" x1="1772" y1="800" x2="1800" y2="862">
 <stop offset="0" stop-color="#00be00"/><stop offset="0.55" stop-color="#00d800"/><stop offset="0.8" stop-color="#c0e000"/><stop offset="0.9" stop-color="#ffe000"/><stop offset="1" stop-color="#ffb400"/>
</linearGradient>
<linearGradient id="pOrC" gradientUnits="userSpaceOnUse" x1="1740" y1="805" x2="1815" y2="790">
 <stop offset="0" stop-color="#ffa000"/><stop offset="0.45" stop-color="#ffb000"/><stop offset="0.75" stop-color="#ffe000"/><stop offset="1" stop-color="#c0e000" stop-opacity="0"/>
</linearGradient>
<linearGradient id="pRidge" gradientUnits="userSpaceOnUse" x1="1760" y1="850" x2="1810" y2="940">
 <stop offset="0" stop-color="#00a000"/><stop offset="0.6" stop-color="#009414"/><stop offset="1" stop-color="#008c40"/>
</linearGradient>
<linearGradient id="pValley" gradientUnits="userSpaceOnUse" x1="1800" y1="930" x2="1850" y2="980">
 <stop offset="0" stop-color="#008c50"/><stop offset="0.3" stop-color="#00a0b0"/><stop offset="0.6" stop-color="#00d8f0"/><stop offset="0.8" stop-color="#00c4ec"/><stop offset="1" stop-color="#00b0e0"/>
</linearGradient>
<linearGradient id="pRight" gradientUnits="userSpaceOnUse" x1="1912" y1="900" x2="1990" y2="955">
 <stop offset="0" stop-color="#00a800"/><stop offset="0.42" stop-color="#00d400"/><stop offset="0.6" stop-color="#ffe000"/><stop offset="0.82" stop-color="#ffa000"/><stop offset="1" stop-color="#ff8800"/>
</linearGradient>
<linearGradient id="pWedge" gradientUnits="userSpaceOnUse" x1="1758" y1="1012" x2="1722" y2="1068">
 <stop offset="0" stop-color="#008c5a"/><stop offset="0.22" stop-color="#00d0ec"/><stop offset="0.45" stop-color="#00a8f0"/><stop offset="0.75" stop-color="#0030f0"/><stop offset="1" stop-color="#0000c0"/>
</linearGradient>
</defs>
<g id="panels">
<g fill="none" stroke="#b4b2aa" stroke-width="1">
<rect x="1558.5" y="133.5" width="484" height="313"/>
<rect x="1558.5" y="450.5" width="484" height="316"/>
<rect x="1558.5" y="770.5" width="484" height="312"/>
</g>
<!-- top panel -->
<polygon fill="url(#pTopGreen)" points="1646,192.4 1803.4,192.4 1818.9,243.8 1894,243.8 1914,192.4 1955,192.4 1955,243.8 1646,243.8"/>
<polygon fill="url(#pTopOr)" points="1646,243.8 1707.5,243.8 1646,295.8"/>
<polygon fill="url(#pTopOr)" points="1707.5,243.8 1771,243.8 1780,261.7 1769.8,297.3"/>
<polygon fill="url(#pTopOr)" points="1945,270.6 1955,250 1955,300"/>
<polygon fill="url(#pTopV)" points="1771,243.8 1955,243.8 1955,250 1945,270.6 1893,388 1832,362.7 1780,261.7"/>
<line x1="1646" y1="254.5" x2="1770" y2="254.5" stroke="#f0f0f0"/>
<line x1="1834" y1="254.5" x2="1956" y2="254.5" stroke="#f0f0f0"/>
<!-- middle panel heatmap -->
<rect x="1645" y="453" width="312" height="311" fill="url(#pHeat)"/>
<g clip-path="url(#cHeat)">
<g filter="url(#blur3)">
<polygon fill="url(#pHeatG2)" points="1640,663 1672,663 1678,690 1733,690 1733,600 1762,678 1790,678 1800,600 1800,770 1640,770"/>
<polygon fill="#00a000" opacity="0.7" points="1690,690 1706,740 1722,690"/>
<polygon fill="#00dc00" opacity="0.8" points="1759,680 1773,680 1773,705 1759,705"/>
<polygon fill="#ffe100" opacity="0.8" points="1645,480 1662,480 1662,492 1645,492"/>
<polygon fill="#ffe100" opacity="0.8" points="1645,538 1660,538 1660,550 1645,550"/>
<polygon fill="#ff9600" opacity="0.7" points="1645,508 1666,508 1670,522 1645,522"/>
<polygon fill="#ff9600" opacity="0.7" points="1645,563 1670,563 1672,582 1645,582"/>
<polygon fill="#ff9000" opacity="0.6" points="1755,455 1775,455 1775,466 1755,466"/>
<polygon fill="#ff9000" opacity="0.6" points="1755,565 1775,565 1775,585 1755,585"/>
</g>
<rect x="1831" y="453" width="65" height="50" fill="url(#pTeal)" mask="url(#mTeal)" opacity="0"/>
<rect x="1834" y="453" width="62" height="47" fill="url(#pTeal)"/>
<g filter="url(#blur2)">
<polygon fill="#0068e0" points="1831,676 1896,692 1918,740 1934,764 1800,764 1818,725"/>
<path d="M1831 676 Q1826 730 1800 764" stroke="#00e0f8" stroke-width="3" fill="none"/>
<path d="M1896 692 Q1905 735 1934 764" stroke="#00e0f8" stroke-width="3" fill="none"/>
</g>
<rect x="1831" y="635" width="65" height="15" fill="#00d8f0"/>
<rect x="1831" y="650" width="65" height="20" fill="#00b0d8"/>
<rect x="1831" y="670" width="65" height="22" fill="#00d8f0"/>
<rect x="1831" y="692" width="65" height="12" fill="#00a0f0"/>
<rect x="1831" y="704" width="65" height="18" fill="#0050e0"/>
<rect x="1831" y="722" width="65" height="16" fill="#0000f0"/>
<rect x="1831" y="738" width="65" height="24" fill="#0000c8"/>
<rect x="1645" y="758" width="150" height="6" fill="#008a50" opacity="0.8"/><rect x="1790" y="760" width="167" height="4" fill="#0040d0" opacity="0.5"/>
</g>
<!-- bottom panel 3D -->
<polygon fill="url(#pRidge)" points="1583.5,893.2 1614.5,834.2 1681.8,842.5 1698.4,831 1724.3,827 1735.7,800 1763.6,797 1775,775.2 1783.3,772.5 1845.4,772.5 1868.2,807.3 1910,779.7 1930,864.3 1840.8,983.3 1814.4,1031.8 1783.5,1079.3 1724,1079.3 1671,954.7 1660,948"/>
<polygon fill="#00b400" opacity="0.5" points="1614.5,834.2 1681.8,842.5 1698.4,831 1727,896 1680,905 1640,880 1600,870"/>
<polygon fill="url(#pFar)" points="1698.4,831 1724.3,827 1735.7,800 1763.6,797 1775,775.2 1783.3,772.5 1845.4,772.5 1868.2,807.3 1839.2,830 1797.8,859 1766.7,877.7 1741.9,888 1727.4,896.3 1712,880 1690,845"/>
<polygon fill="url(#pOrC)" points="1735.7,800 1763.6,797 1775,775.2 1783.3,772.5 1818,772.5 1812,788 1775,810 1750,826 1724.3,827"/>
<polygon fill="url(#pValley)" points="1924.6,840 1930,864.3 1955.5,865.4 1920,890.7 1880.5,926 1851.8,950 1840.8,972 1840.8,983.3 1814.4,1031.8 1803,1045 1700,950 1760,958 1820,925 1880,880"/>
<polygon fill="#008c5a" points="1583.5,893.2 1594.8,873.5 1632,902.5 1669.4,931.5 1700,950 1760,990 1814,1031.8 1803,1045 1671,954.7"/>
<polygon fill="#0060e8" opacity="0.85" points="1754.8,1003 1768,994 1824,1024 1816,1034 1799,1034"/>
<polygon fill="url(#pRight)" points="1955.5,865.4 1990.8,840 2018.3,926 1999.6,950 1979.7,954.7 1964.3,962.4 1924.6,979 1909,983.3 1891.5,992 1871.7,995.5 1851.8,993.3 1840.8,983.3 1840.8,972 1851.8,950 1880.5,926 1920,890.7"/>
<polygon fill="url(#pWedge)" points="1671,954.7 1803,1045 1783.5,1079.3 1724,1079.3"/>
</g>

</svg>

<!-- status bar -->
<div class="a" style="left:0;top:1086px;width:2047px;height:25px;background:#f0f0f0;border-top:1px solid #c8c8c8"></div><div class="a" style="left:0;top:1087px;width:2047px;height:1px;background:#fafafa"></div><div class="a" style="left:0;top:1088px;width:2047px;height:1px;background:#e4e4e4"></div>
<svg class="a" style="left:0;top:1087px" width="24" height="24">
<path d="M9.5 9 H6 L3.5 12.5 L6 16 H9.5 M7 11 H10 L8.5 14 H6" fill="none" stroke="#222" stroke-width="1.3"/>
<path d="M12.5 9 H16 L18.5 12.5 L16 16 H12.5 M15 11 H12 L13.5 14 H16" fill="none" stroke="#222" stroke-width="1.3"/>
<path d="M7.5 5.5 L9 7 M11.5 5 V7 M15.5 5.5 L14 7 M6.5 19.5 L8 18 M10.5 20 V18 M14.5 19.5 L13 18" stroke="#222" stroke-width="1"/>
</svg>
<div class="sbt" style="left:30px">Ligne de mesures: 0,00 m</div>
<div class="sbt" style="left:222px">Impulsions: 0,00 m</div>
<div class="sbt" style="left:414px">Profondeur: 3,90 m / 5,14 m</div>
<div class="ssep" style="left:22px"></div>
<div class="ssep" style="left:214px"></div>
<div class="ssep" style="left:406px"></div>
<div class="ssep" style="left:598px"></div>
<div class="selb" style="left:1980px;top:1090px;width:18px;height:19px;border-color:#3c7fb1"></div>
<div class="a" style="left:2002px;top:1090px;width:18px;height:19px;background:#e1e1e1;border:1px solid #adadad"></div>
<div class="selb" style="left:2025px;top:1090px;width:18px;height:19px;border-color:#3c7fb1"></div>
<div class="sbt" style="left:1985px;top:1092px;font-weight:bold">X</div>
<div class="sbt" style="left:2007px;top:1092px;font-weight:bold">Y</div>
<div class="sbt" style="left:2030px;top:1092px;font-weight:bold">Z</div>

</body></html>
